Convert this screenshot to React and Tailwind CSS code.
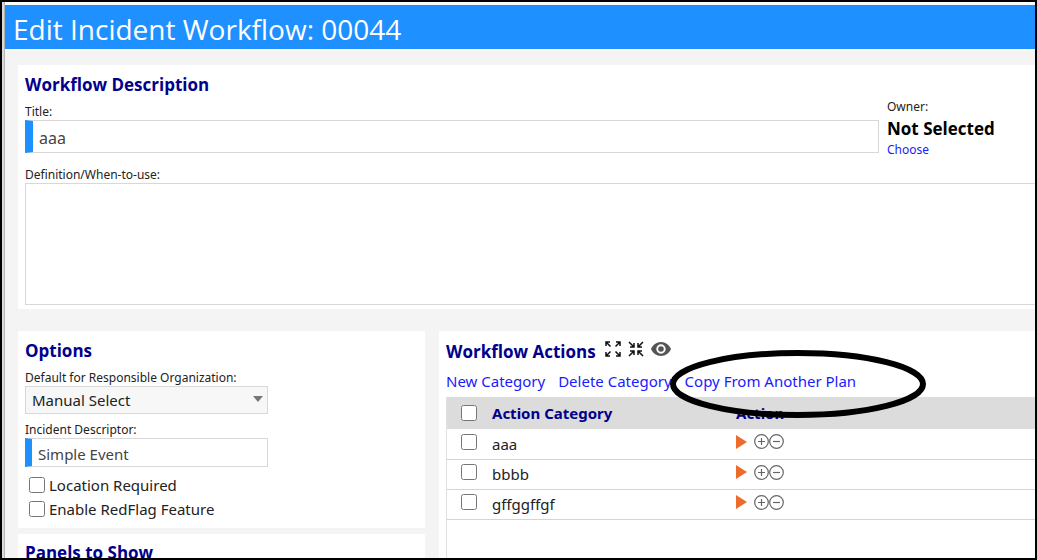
import React, { useState } from 'react';

const CATEGORIES = [
  { id: 1, name: 'aaa' },
  { id: 2, name: 'bbbb' },
  { id: 3, name: 'gffggffgf' },
];

function PanelHeading({ children }) {
  return <h2 className="font-['Open_Sans',sans-serif] text-[17px] leading-6 font-bold text-[#00008b] whitespace-nowrap">{children}</h2>;
}

function ExpandIcon() {
  return (
    <svg width="16" height="16" viewBox="0 0 16 16" fill="none" stroke="#111" strokeWidth="1.5">
      <path d="M1 5V1h4M1 1l4.500 4.500M11 1h4v4M15 1l-4.500 4.500M1 11v4h4M1 15l4.500-4.500M15 11v4h-4M15 15l-4.500-4.500" />
    </svg>
  );
}

function CollapseIcon() {
  return (
    <svg width="16" height="16" viewBox="0 0 16 16" fill="none" stroke="#111" strokeWidth="1.5">
      <path d="M2 6h4V2M6 6L1 1M14 6h-4V2M10 6l5-5M2 10h4v4M6 10l-5 5M14 10h-4v4M10 10l5 5" />
    </svg>
  );
}

function EyeIcon() {
  return (
    <svg width="20" height="14" viewBox="0 0 20 14">
      <path fill="#555" fillRule="evenodd" d="M10 0C5.500 0 1.700 2.900 0 7c1.700 4.100 5.500 7 10 7s8.300-2.900 10-7c-1.700-4.100-5.500-7-10-7zm0 11.700a4.700 4.700 0 1 1 0-9.400 4.700 4.700 0 0 1 0 9.400zm0-1.900a2.800 2.800 0 1 0 0-5.600 2.800 2.800 0 0 0 0 5.600z" />
    </svg>
  );
}

function CircleIcon({ plus }) {
  return (
    <svg width="15" height="15" viewBox="0 0 15 15" fill="none" stroke="#666" strokeWidth="1.2">
      <circle cx="7.5" cy="7.5" r="6.8" />
      <path d={plus ? 'M4 7.500h7M7.500 4v7' : 'M4 7.500h7'} />
    </svg>
  );
}

function DescriptionPanel() {
  const [title, setTitle] = useState('aaa');

  return (
    <section className="bg-white pt-2 pb-1 pl-[7px]">
      <div className="flex gap-2">
        <div className="flex-1 min-w-0">
          <PanelHeading>Workflow Description</PanelHeading>
          <label htmlFor="title" className="block mt-[7px] text-xs">Title:</label>
          <input
            id="title"
            value={title}
            onChange={e => setTitle(e.target.value)}
            className="block w-full h-[33px] border border-[#d8d8d8] border-l-8 border-l-[#1e90ff] pl-1.5 pt-0.5 text-base text-[#444] outline-none"
          />
        </div>
        <div className="w-[148px] pt-[26px]">
          <div className="text-xs">Owner:</div>
          <div className="font-['Open_Sans',sans-serif] text-[17px] leading-6 font-bold text-black mt-0.5">Not Selected</div>
          <a href="#choose" className="block pt-px text-xs text-[#1a1aff]">Choose</a>
        </div>
      </div>
      <label htmlFor="definition" className="block mt-[9px] text-xs">Definition/When-to-use:</label>
      <textarea id="definition" className="block w-full h-[122px] border border-r-0 border-[#d8d8d8] resize-none outline-none" />
    </section>
  );
}

function OptionsPanel() {
  return (
    <section className="bg-white px-[7px] pt-2 pb-[7px]">
      <PanelHeading>Options</PanelHeading>
      <label htmlFor="org" className="block mt-[7px] text-xs">Default for Responsible Organization:</label>
      <div className="relative w-[243px]">
        <select id="org" className="block appearance-none w-full h-7 border border-[#d8d8d8] bg-[#f7f7f7] pl-1.5 text-[15px] text-[#222] outline-none">
          <option>Manual Select</option>
        </select>
        <svg width="10" height="6" viewBox="0 0 10 6" className="absolute right-[5px] top-[10px] pointer-events-none">
          <path d="M0 0h10L5 6z" fill="#777" />
        </svg>
      </div>
      <label htmlFor="descriptor" className="block mt-2 text-xs">Incident Descriptor:</label>
      <input
        id="descriptor"
        defaultValue="Simple Event"
        className="block w-[243px] h-[29px] border border-[#d8d8d8] border-l-[7px] border-l-[#1e90ff] pl-1.5 pt-0.5 text-[15px] text-[#444] outline-none"
      />
      <div className="mt-1.5 pl-1 text-[15px] leading-6">
        <label className="flex items-center gap-1">
          <input type="checkbox" className="size-4" /> Location Required
        </label>
        <label className="flex items-center gap-1">
          <input type="checkbox" className="size-4" /> Enable RedFlag Feature
        </label>
      </div>
    </section>
  );
}

function ActionsPanel() {
  return (
    <section className="flex-1 min-w-0 flex flex-col bg-white pt-[9px] pl-[7px]">
      <div className="flex items-center gap-[9px]">
        <PanelHeading>Workflow Actions</PanelHeading>
        <div className="flex items-center gap-[7px] pb-1.5">
          <button aria-label="Expand all"><ExpandIcon /></button>
          <button aria-label="Collapse all"><CollapseIcon /></button>
          <button aria-label="Show hidden"><EyeIcon /></button>
        </div>
      </div>
      <div className="flex gap-[13px] mt-[5px] pb-1 text-[15px] leading-6 text-[#1a1aff] whitespace-nowrap">
        <a href="#new">New Category</a>
        <a href="#delete">Delete Category</a>
        <span className="relative">
          <a href="#copy">Copy From Another Plan</a>
          <svg width="258" height="70" viewBox="0 0 258 70" className="absolute -left-4 -top-5 max-w-none pointer-events-none">
            <ellipse cx="129" cy="35" rx="125" ry="31" fill="none" stroke="#000" strokeWidth="6" />
          </svg>
        </span>
      </div>
      <div className="flex-1 border-l border-[#e0e0e0]">
        <table className="w-full table-fixed border-collapse text-[15px]">
          <thead>
            <tr className="h-8 bg-[#dcdcdc] text-left text-[#00008b]">
              <th className="w-[45px] pl-3.5">
                <input type="checkbox" aria-label="Select all" className="block size-4" />
              </th>
              <th className="w-[244px]">Action Category</th>
              <th>Action</th>
            </tr>
          </thead>
          <tbody>
            {CATEGORIES.map(c => (
              <tr key={c.id} className="h-[30px] border-b border-[#d4d4d4]">
                <td className="pl-3.5 pb-1">
                  <input type="checkbox" aria-label={`Select ${c.name}`} className="block size-4" />
                </td>
                <td>{c.name}</td>
                <td className="pb-1">
                  <div className="flex items-center">
                    <button aria-label="Run" className="mr-[7px]">
                      <svg width="11" height="14" viewBox="0 0 11 14"><path d="M0 0l11 7-11 7z" fill="#ee6c2b" /></svg>
                    </button>
                    <button aria-label="Add action"><CircleIcon plus /></button>
                    <button aria-label="Remove action"><CircleIcon /></button>
                  </div>
                </td>
              </tr>
            ))}
          </tbody>
        </table>
      </div>
    </section>
  );
}

export default function App() {
  return (
    <div className="h-screen overflow-hidden flex border-2 border-black bg-white font-['Noto_Sans',sans-serif] text-[#222]">
      <div className="w-[3px] shrink-0 bg-[#dcd8d6] border-r border-[#b5b5b5]" />
      <div className="flex-1 min-w-0 flex flex-col pt-[3px]">
        <h1 className="h-11 shrink-0 bg-[#1e90ff] pl-2 font-['Open_Sans',sans-serif] text-[28px] leading-[48px] text-white whitespace-nowrap">
          Edit Incident Workflow: 00044
        </h1>
        <main className="flex-1 min-h-0 mt-0.5 pt-3.5 pl-[13px] bg-[#f4f4f4] flex flex-col">
          <DescriptionPanel />
          <div className="flex flex-1 min-h-0 gap-3.5 mt-[22px]">
            <div className="w-[407px] shrink-0 flex flex-col gap-1.5">
              <OptionsPanel />
              <section className="bg-white p-[7px]">
                <PanelHeading>Panels to Show</PanelHeading>
              </section>
            </div>
            <ActionsPanel />
          </div>
        </main>
      </div>
    </div>
  );
}
